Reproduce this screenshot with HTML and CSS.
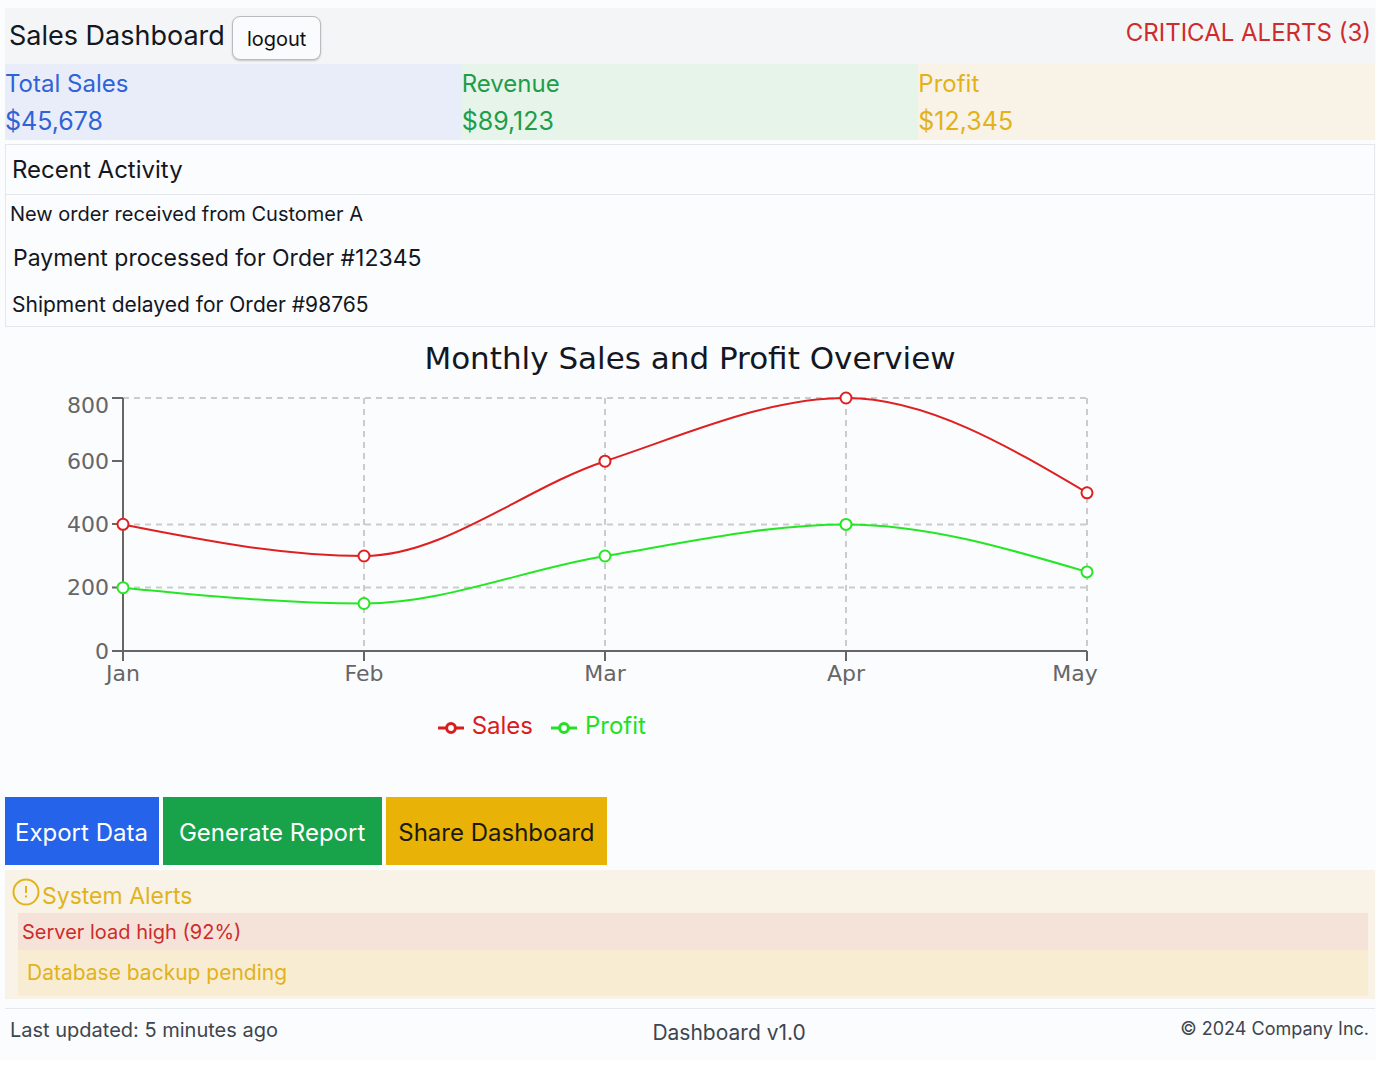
FILE: index.html
```html
<!DOCTYPE html>
<html lang="en">
<head>
<meta charset="utf-8">
<title>Sales Dashboard</title>
<link rel="stylesheet" href="styles.css">
</head>
<body>
<div class="dashboard">
  <header class="topbar">
    <div class="brand">
      <h1 class="brand-title">Sales Dashboard</h1>
      <button type="button" class="logout">logout</button>
    </div>
    <p class="critical">CRITICAL ALERTS (3)</p>
  </header>

  <section class="metrics">
    <div class="metric metric-sales"><h2 class="metric-label">Total Sales</h2><p class="metric-value">$45,678</p></div>
    <div class="metric metric-revenue"><h2 class="metric-label">Revenue</h2><p class="metric-value">$89,123</p></div>
    <div class="metric metric-profit"><h2 class="metric-label">Profit</h2><p class="metric-value">$12,345</p></div>
  </section>

  <section class="activity">
    <h2 class="activity-title">Recent Activity</h2>
    <ul class="activity-list">
      <li class="activity-item item-small">New order received from Customer A</li>
      <li class="activity-item item-large">Payment processed for Order #12345</li>
      <li class="activity-item item-medium">Shipment delayed for Order #98765</li>
    </ul>
  </section>

  <section class="overview">
    <h2 class="overview-title">Monthly Sales and Profit Overview</h2>
    <svg class="chart" viewBox="5 386 1370 304" role="img" aria-label="Monthly sales and profit, January to May">
      <g class="grid">
        <path d="M123 398H1087M123 524.5H1087M123 587.5H1087"/>
        <path d="M364 398V651M605 398V651M846 398V651M1087 398V651"/>
      </g>
      <g class="axis">
        <path d="M123 398V651M112 398H123M112 461H123M112 524H123M112 587.5H123M112 651H1087"/>
        <path d="M123 651V661M364 651V661M605 651V661M846 651V661M1087 651V661"/>
      </g>
      <g class="ticks ticks-y">
        <text x="109" y="413">800</text>
        <text x="109" y="469">600</text>
        <text x="109" y="532">400</text>
        <text x="109" y="595">200</text>
        <text x="109" y="659">0</text>
      </g>
      <g class="ticks ticks-x">
        <text x="123" y="681">Jan</text>
        <text x="364" y="681">Feb</text>
        <text x="605" y="681">Mar</text>
        <text x="846" y="681">Apr</text>
        <text x="1075" y="681">May</text>
      </g>
      <g class="series series-sales">
        <path d="M123 524.5C203 540.3 284 556 364 556C444 556 525 487.6 605 461.2C685 434.9 766 398 846 398C926 398 1007 445.4 1087 492.8"/>
        <circle cx="123" cy="524.3" r="5.5"/><circle cx="364" cy="556" r="5.5"/><circle cx="605" cy="461.2" r="5.5"/><circle cx="846" cy="398" r="5.5"/><circle cx="1087" cy="492.8" r="5.5"/>
      </g>
      <g class="series series-profit">
        <path d="M123 587.7C203 595.6 284 603.5 364 603.5C444 603.5 525 569.2 605 556C685 542.8 766 524.4 846 524.4C926 524.4 1007 548.1 1087 571.9"/>
        <circle cx="123" cy="587.7" r="5.5"/><circle cx="364" cy="603.5" r="5.5"/><circle cx="605" cy="556" r="5.5"/><circle cx="846" cy="524.4" r="5.5"/><circle cx="1087" cy="571.9" r="5.5"/>
      </g>
    </svg>
    <ul class="legend">
      <li class="legend-item legend-sales">
        <svg class="legend-mark" width="26" height="14" viewBox="0 0 26 14" aria-hidden="true"><path d="M0 7H8.500M17.500 7H26"/><circle cx="13" cy="7" r="4.400"/></svg>Sales</li>
      <li class="legend-item legend-profit">
        <svg class="legend-mark" width="26" height="14" viewBox="0 0 26 14" aria-hidden="true"><path d="M0 7H8.500M17.500 7H26"/><circle cx="13" cy="7" r="4.400"/></svg>Profit</li>
    </ul>
  </section>

  <div class="actions">
    <button type="button" class="action action-export">Export Data</button>
    <button type="button" class="action action-report">Generate Report</button>
    <button type="button" class="action action-share">Share Dashboard</button>
  </div>

  <section class="alerts">
    <div class="alerts-head">
      <svg class="alerts-icon" width="28" height="28" viewBox="0 0 28 28" aria-hidden="true"><circle cx="14" cy="14" r="12.500"/><path d="M14 8V15M14 17.500V19.500"/></svg>
      <h2 class="alerts-title">System Alerts</h2>
    </div>
    <p class="alert alert-error">Server load high (92%)</p>
    <p class="alert alert-warning">Database backup pending</p>
  </section>

  <footer class="footer">
    <span class="footer-updated">Last updated: 5 minutes ago</span>
    <span class="footer-version">Dashboard v1.0</span>
    <span class="footer-copyright">© 2024 Company Inc.</span>
  </footer>
</div>
</body>
</html>
```
FILE: styles.css
```css
* { box-sizing: border-box; }

body {
  margin: 0;
  background: #fff;
  color: #131722;
  font-family: Inter, "Liberation Sans", sans-serif;
}

h1, h2, p, ul { margin: 0; padding: 0; font-weight: 400; }
ul { list-style: none; }
button { font-family: inherit; cursor: pointer; }

.dashboard { padding: 8px 1px 0 5px; background: #fbfcfe; }

.topbar {
  display: flex;
  justify-content: space-between;
  height: 56px;
  padding: 0 4px;
  background: #f4f5f7;
}
.brand { display: flex; align-items: center; gap: 7px; }
.brand-title { font-size: 27px; line-height: 36px; }
.logout {
  height: 44px;
  margin-top: 4px;
  padding: 2px 14px 0;
  border: 1px solid #b9bbbe;
  border-radius: 8px;
  background: #fafbfc;
  box-shadow: 0 1px 2px #0003;
  color: #111;
  font-size: 20px;
}
.critical { padding-top: 9px; font-size: 24px; line-height: 32px; color: #ce2c2c; }

.metrics { display: grid; grid-template-columns: repeat(3, 1fr); }
.metric { padding-top: 1px; line-height: 38px; }
.metric-label { font-size: 24px; }
.metric-value { font-size: 25px; line-height: 37px; }
.metric-sales { background: #e9edfa; color: #2f63d6; }
.metric-revenue { background: #e6f4ea; color: #1f9d4b; }
.metric-profit { background: #f8f3e6; color: #e2b21b; }

.activity { margin-top: 4px; border: 1px solid #e3e6ea; }
.activity-title {
  padding: 1px 6px 0;
  border-bottom: 1px solid #e3e6ea;
  font-size: 24px;
  line-height: 48px;
}
.item-small { padding-left: 4px; font-size: 20px; line-height: 38px; }
.item-large { padding: 1px 0 0 7px; font-size: 23px; line-height: 48px; }
.item-medium { padding: 1px 0 0 6px; font-size: 21px; line-height: 43px; }

.overview-title {
  padding-top: 3px;
  font-family: "DejaVu Sans", sans-serif;
  font-size: 31px;
  line-height: 56px;
  text-align: center;
}
.chart { display: block; width: 100%; height: auto; }
.grid { fill: none; stroke: #ccc; stroke-width: 2; stroke-dasharray: 6 5; }
.axis { fill: none; stroke: #666; stroke-width: 2; }
.ticks { fill: #666; font-family: "DejaVu Sans", sans-serif; font-size: 22px; }
.ticks-y { text-anchor: end; }
.ticks-x { text-anchor: middle; }
.series path { fill: none; stroke-width: 2; }
.series circle { fill: #fff; stroke-width: 2; }
.series-sales { stroke: #de2020; }
.series-profit { stroke: #25e625; }

.legend {
  display: flex;
  justify-content: center;
  gap: 18px;
  width: 78%;
  padding: 16px 0 52px 5px;
  font-size: 24px;
  line-height: 39px;
}
.legend-item { display: flex; align-items: center; gap: 8px; }
.legend-mark { margin-top: 4px; fill: none; stroke: currentColor; stroke-width: 3; }
.legend-sales { color: #d91c1c; }
.legend-profit { color: #22e022; }

.actions { display: flex; gap: 4px; }
.action {
  height: 68px;
  border: 0;
  color: #fff;
  font-size: 24px;
}
.action-export { padding: 2px 11px 0 10px; background: #2563eb; }
.action-report { padding: 2px 17px 0 16px; background: #18a34a; }
.action-share { padding: 2px 13px 0 12px; background: #e8b306; color: #1c1a10; }

.alerts { margin-top: 5px; padding: 0 7px 3px; background: #f8f3e6; color: #e2b21b; }
.alerts-head { display: flex; height: 43px; gap: 2px; }
.alerts-icon { margin-top: 8px; fill: none; stroke: currentColor; stroke-width: 2; }
.alerts-title { padding-top: 8px; font-size: 23px; line-height: 36px; }
.alert { margin-left: 6px; }
.alert-error {
  padding: 1px 0 0 4px;
  background: #f5e3d9;
  color: #cd2c2c;
  font-size: 20px;
  line-height: 36px;
}
.alert-warning { padding-left: 9px; background: #f8edd2; font-size: 21px; line-height: 46px; }

.footer {
  display: flex;
  justify-content: space-between;
  height: 52px;
  margin-top: 9px;
  padding: 0 6px 0 5px;
  border-top: 1px solid #e3e8ec;
  color: #3e454f;
  line-height: 42px;
}
.footer-updated { font-size: 20px; }
.footer-version { padding-top: 3px; font-size: 21px; }
.footer-copyright { font-size: 18px; line-height: 40px; }
```
